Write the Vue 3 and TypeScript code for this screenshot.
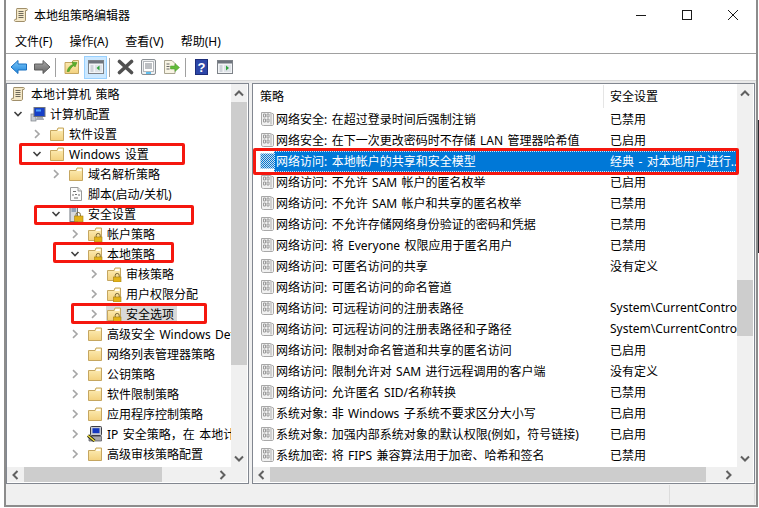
<script setup lang="ts">
type TreeNode = { label: string; level: number; icon: string; chev: '' | 'open' | 'closed'; selected?: boolean }
type PolicyRow = { name: string; value: string; selected?: boolean }

const menus = ['文件(F)', '操作(A)', '查看(V)', '帮助(H)']

const tree: TreeNode[] = [
  { label: '本地计算机 策略', level: 0, icon: 'scroll', chev: '' },
  { label: '计算机配置', level: 1, icon: 'computer', chev: 'open' },
  { label: '软件设置', level: 2, icon: 'folder', chev: 'closed' },
  { label: 'Windows 设置', level: 2, icon: 'folder', chev: 'open' },
  { label: '域名解析策略', level: 3, icon: 'folder', chev: 'closed' },
  { label: '脚本(启动/关机)', level: 3, icon: 'script', chev: '' },
  { label: '安全设置', level: 3, icon: 'server', chev: 'open' },
  { label: '帐户策略', level: 4, icon: 'lockfolder', chev: 'closed' },
  { label: '本地策略', level: 4, icon: 'lockfolder', chev: 'open' },
  { label: '审核策略', level: 5, icon: 'lockfolder', chev: 'closed' },
  { label: '用户权限分配', level: 5, icon: 'lockfolder', chev: 'closed' },
  { label: '安全选项', level: 5, icon: 'lockfolder', chev: 'closed', selected: true },
  { label: '高级安全 Windows Defender 防火墙', level: 4, icon: 'folder', chev: 'closed' },
  { label: '网络列表管理器策略', level: 4, icon: 'folder', chev: '' },
  { label: '公钥策略', level: 4, icon: 'folder', chev: 'closed' },
  { label: '软件限制策略', level: 4, icon: 'folder', chev: 'closed' },
  { label: '应用程序控制策略', level: 4, icon: 'folder', chev: 'closed' },
  { label: 'IP 安全策略，在 本地计算机', level: 4, icon: 'ipsec', chev: 'closed' },
  { label: '高级审核策略配置', level: 4, icon: 'folder', chev: 'closed' }
]

const policies: PolicyRow[] = [
  { name: '网络安全: 在超过登录时间后强制注销', value: '已禁用' },
  { name: '网络安全: 在下一次更改密码时不存储 LAN 管理器哈希值', value: '已启用' },
  { name: '网络访问: 本地帐户的共享和安全模型', value: '经典 - 对本地用户进行..', selected: true },
  { name: '网络访问: 不允许 SAM 帐户的匿名枚举', value: '已启用' },
  { name: '网络访问: 不允许 SAM 帐户和共享的匿名枚举', value: '已禁用' },
  { name: '网络访问: 不允许存储网络身份验证的密码和凭据', value: '已禁用' },
  { name: '网络访问: 将 Everyone 权限应用于匿名用户', value: '已禁用' },
  { name: '网络访问: 可匿名访问的共享', value: '没有定义' },
  { name: '网络访问: 可匿名访问的命名管道', value: '' },
  { name: '网络访问: 可远程访问的注册表路径', value: 'System\\CurrentControlSet' },
  { name: '网络访问: 可远程访问的注册表路径和子路径', value: 'System\\CurrentControlSet' },
  { name: '网络访问: 限制对命名管道和共享的匿名访问', value: '已启用' },
  { name: '网络访问: 限制允许对 SAM 进行远程调用的客户端', value: '没有定义' },
  { name: '网络访问: 允许匿名 SID/名称转换', value: '已禁用' },
  { name: '系统对象: 非 Windows 子系统不要求区分大小写', value: '已启用' },
  { name: '系统对象: 加强内部系统对象的默认权限(例如，符号链接)', value: '已启用' },
  { name: '系统加密: 将 FIPS 兼容算法用于加密、哈希和签名', value: '已禁用' }
]

const indent = (n: TreeNode) => (n.level === 0 ? 3 : 5 + (n.level - 1) * 19) + 'px'
</script>

<template>
  <div class="screen">
    <svg class="defs" width="0" height="0" aria-hidden="true">
      <defs>
        <linearGradient id="gFolder" x1="0" y1="0" x2="0" y2="1">
          <stop offset="0" stop-color="#fdeeb8" />
          <stop offset="1" stop-color="#f3d17e" />
        </linearGradient>
        <linearGradient id="gBlue" x1="0" y1="0" x2="0" y2="1">
          <stop offset="0" stop-color="#7cc8f8" />
          <stop offset="1" stop-color="#1e84dc" />
        </linearGradient>
        <linearGradient id="gGray" x1="0" y1="0" x2="0" y2="1">
          <stop offset="0" stop-color="#a8a8a8" />
          <stop offset="1" stop-color="#646464" />
        </linearGradient>
        <pattern id="pDither" width="2" height="2" patternUnits="userSpaceOnUse">
          <rect width="2" height="2" fill="#0078d7" />
          <rect width="1" height="1" fill="#d6dde4" />
          <rect x="1" y="1" width="1" height="1" fill="#d6dde4" />
        </pattern>
        <symbol id="i-scroll" viewBox="0 0 16 16">
          <path d="M4 1.5h9.5c1 0 1.2 1.5.5 2H12.5V13c0 1.2-1 1.5-1.5 1.5H2.5c-1.2 0-1.5-1.8-.5-2.2H3.5V3C3.5 2 3.6 1.5 4 1.5Z" fill="#f4e8c8" stroke="#a08f6a" />
          <path d="M5.5 4.5h5M5.5 6.5h5M5.5 8.5h5M5.5 10.5h5" stroke="#6f6a5c" />
        </symbol>
        <symbol id="i-folder" viewBox="0 0 16 16">
          <path d="M1.5 4.5H8L9 2H14.5V14.5H1.5Z" fill="url(#gFolder)" stroke="#c5a660" />
          <path d="M9.5 3H13.5V5H8.8Z" fill="#fffdf2" />
        </symbol>
        <symbol id="i-lockfolder" viewBox="0 0 16 16">
          <path d="M1.5 4.5H8L9 2H14.5V14.5H1.5Z" fill="url(#gFolder)" stroke="#c5a660" />
          <path d="M9.5 3H13.5V5H8.8Z" fill="#fffdf2" />
          <path d="M9.2 11V9.4a2 2 0 0 1 4 0V11" fill="none" stroke="#7a6a3a" />
          <rect x="7.5" y="11" width="7.5" height="5" fill="#e2b21a" stroke="#a47f10" stroke-width=".6" />
        </symbol>
        <symbol id="i-computer" viewBox="0 0 16 16">
          <rect x="1" y="8" width="5" height="7" fill="#c8ccd2" stroke="#7c8088" stroke-width=".7" />
          <rect x="4" y="1.5" width="11" height="9" fill="#1640c8" stroke="#70747c" />
          <path d="M6 3.5h5v2H6Z" fill="#4fa4ff" />
          <path d="M7 11h6v1.5H14V14H6v-1.5h1Z" fill="#a8acb4" />
        </symbol>
        <symbol id="i-script" viewBox="0 0 16 16">
          <path d="M2.5 1.5H10L13.5 5V14.5H2.5Z" fill="#fbfbfb" stroke="#9a9a9a" />
          <path d="M10 1.5V5H13.5" fill="#e8e8e8" stroke="#9a9a9a" />
          <path d="M5 5.5h3M5.5 8l-1 1 1 1M10.5 8l1 1-1 1M7 8.5h2M6 12h4" stroke="#707070" fill="none" />
        </symbol>
        <symbol id="i-server" viewBox="0 0 16 16">
          <rect x="2" y="0.5" width="7.5" height="15" fill="#d7dbe0" stroke="#70767e" />
          <path d="M3.5 3h4.5M3.5 5h4.5" stroke="#4c6a8e" />
          <path d="M8 10V8.6a2.2 2.2 0 0 1 4.4 0V10" fill="none" stroke="#7a6a3a" />
          <rect x="6.5" y="10" width="8.5" height="5.8" fill="#e2b21a" stroke="#a47f10" stroke-width=".6" />
        </symbol>
        <symbol id="i-ipsec" viewBox="0 0 16 16">
          <rect x="3.5" y="0.5" width="11" height="9" rx="1" fill="#c8ccd2" stroke="#3c3c44" />
          <rect x="5.5" y="2.2" width="7" height="5" fill="#1438c0" />
          <path d="M2 10.5h12.5V15H2Z" fill="#a8a8ac" stroke="#505058" stroke-width=".7" />
          <path d="M1 9.5l6.5 5.5" stroke="#1c1c10" stroke-width="3" />
          <path d="M1 9.5l6.5 5.5" stroke="#f2e23a" stroke-width="1.6" />
        </symbol>
        <symbol id="i-policy" viewBox="0 0 14 16">
          <path d="M1.5 1.5H10L13.5 3V13c0 1-.5 1.5-1.5 1.5H3.5c-1.5 0-2-.8-2-1.5Z" fill="#f1f1f1" stroke="#a8a8a8" />
          <path d="M3.5 3h2v3h-2ZM7 3h2v3H7ZM3.5 8h2v3h-2ZM7 8h2v3H7Z" fill="none" stroke="#9c9c9c" />
          <path d="M11 2v11.5" stroke="#c8c8c8" stroke-width="1.6" />
        </symbol>
        <symbol id="i-policy-sel" viewBox="0 0 14 16">
          <rect x="0.5" y="0.5" width="13.5" height="15" fill="url(#pDither)" />
        </symbol>
        <symbol id="i-paneview" viewBox="0 0 16 14">
          <rect x="0.5" y="0.5" width="15" height="13" fill="#f2f4f6" stroke="#7d8288" />
          <rect x="1" y="1" width="14" height="2.5" fill="#6e747c" />
          <rect x="2.5" y="5" width="3" height="7" fill="#cfd4da" />
          <rect x="7" y="5" width="7" height="7" fill="#dfe3e8" />
        </symbol>
      </defs>
    </svg>

    <div class="window">
      <header class="titlebar">
        <svg class="title-ico"><use href="#i-scroll" /></svg>
        <span class="title-text">本地组策略编辑器</span>
        <div class="caption">
          <span class="cap-btn"><svg width="12" height="12" viewBox="0 0 12 12"><path d="M1 6.5h10" stroke="#1a1a1a" /></svg></span>
          <span class="cap-btn"><svg width="12" height="12" viewBox="0 0 12 12"><rect x="1.5" y="1.5" width="9" height="9" fill="none" stroke="#1a1a1a" /></svg></span>
          <span class="cap-btn"><svg width="12" height="12" viewBox="0 0 12 12"><path d="M1 1l10 10M11 1L1 11" stroke="#1a1a1a" /></svg></span>
        </div>
      </header>

      <nav class="menubar">
        <span v-for="m in menus" :key="m" class="menu-item">{{ m }}</span>
      </nav>

      <div class="toolbar">
        <span class="tb"><svg width="18" height="16" viewBox="0 0 18 16"><path d="M1 8l7-6.5V5h8.5v6H8v3.5Z" fill="url(#gBlue)" stroke="#1a70c0" stroke-linejoin="round" /></svg></span>
        <span class="tb"><svg width="18" height="16" viewBox="0 0 18 16"><path d="M17 8l-7-6.5V5H1.5v6H10v3.5Z" fill="url(#gGray)" stroke="#5c5c5c" stroke-linejoin="round" /></svg></span>
        <i class="tb-sep"></i>
        <span class="tb">
          <svg width="16" height="16" viewBox="0 0 16 16">
            <path d="M1 3.5H8L9 1.5H14.5V14.5H1Z" fill="url(#gFolder)" stroke="#c5a660" />
            <path d="M3 12.5C4 8.5 6 6.5 9 5.5L8 3l5 .5-2 4.5-1-1.6C7.5 8 6 10 5.2 12.5Z" fill="#5cb02c" stroke="#3c8a1c" stroke-width=".5" />
          </svg>
        </span>
        <span class="tb tb-active">
          <svg width="16" height="14" viewBox="0 0 16 14">
            <use href="#i-paneview" />
            <path d="M11.5 5.5v5l-3-2.5Z" fill="#2fa43c" />
          </svg>
        </span>
        <i class="tb-sep"></i>
        <span class="tb"><svg width="17" height="16" viewBox="0 0 17 16"><path d="M2.5 2.5l12 11M14.5 2.5l-12 11" stroke="#505050" stroke-width="3.6" stroke-linecap="round" /></svg></span>
        <span class="tb">
          <svg width="15" height="16" viewBox="0 0 15 16">
            <rect x="0.5" y="0.5" width="14" height="15" rx="1.5" fill="#eef0f2" stroke="#8a8f94" />
            <rect x="2.5" y="2.5" width="10" height="10" fill="#fff" stroke="#b4b8bc" />
            <path d="M4 5h7M4 7h7M4 9h7" stroke="#7a8088" />
            <path d="M5 14h5" stroke="#3cb0e8" stroke-width="1.6" />
          </svg>
        </span>
        <span class="tb">
          <svg width="17" height="16" viewBox="0 0 17 16">
            <path d="M1.5 1.5H9L12 4.5V14.5H1.5Z" fill="#f8f4e4" stroke="#a8a490" />
            <path d="M3.5 5h3M3.5 7.5h3M3.5 10h3" stroke="#666" />
            <path d="M7.5 7h4.500V4.500L16.500 8.500l-4.500 4V10H7.500Z" fill="#62bc3a" stroke="#48982a" stroke-width=".5" />
          </svg>
        </span>
        <i class="tb-sep"></i>
        <span class="tb">
          <svg width="13" height="16" viewBox="0 0 13 16">
            <rect x="0.5" y="0.5" width="12" height="15" fill="#2c46a8" stroke="#1c2c78" />
            <text x="6.5" y="12.5" text-anchor="middle" font-size="13" font-weight="700" font-family="Liberation Sans, sans-serif" fill="#ffffff">?</text>
          </svg>
        </span>
        <span class="tb">
          <svg width="16" height="14" viewBox="0 0 16 14">
            <use href="#i-paneview" />
            <path d="M9 5.5v5l3-2.5Z" fill="#2fa43c" />
          </svg>
        </span>
      </div>

      <div class="band"></div>

      <main class="panes">
        <section class="pane pane-left">
          <div class="tree">
            <div v-for="n in tree" :key="n.label" class="tree-row" :class="{ root: n.level === 0 }" :style="{ paddingLeft: indent(n) }">
              <span v-if="n.level > 0" class="chev">
                <svg v-if="n.chev === 'open'" width="10" height="8" viewBox="0 0 10 8"><path d="M1.5 2l3.5 3.5L8.500 2" fill="none" stroke="#404040" stroke-width="1.6" /></svg>
                <svg v-else-if="n.chev === 'closed'" width="8" height="10" viewBox="0 0 8 10"><path d="M2 1.200L6 5 2 8.800" fill="none" stroke="#a6a6a6" stroke-width="1.600" /></svg>
              </span>
              <span class="tree-item" :class="{ selected: n.selected }">
                <svg class="tree-ico"><use :href="'#i-' + n.icon" /></svg>
                <span class="tree-label">{{ n.label }}</span>
              </span>
            </div>
          </div>
          <div class="vbar">
            <span class="arrow-v"><svg width="10" height="7" viewBox="0 0 10 7"><path d="M1 5.500l4-4 4 4" fill="none" stroke="#606060" stroke-width="2" /></svg></span>
            <span class="thumb-v thumb-left"></span>
            <span class="spacer"></span>
            <span class="arrow-v"><svg width="10" height="7" viewBox="0 0 10 7"><path d="M1 1.500l4 4 4-4" fill="none" stroke="#606060" stroke-width="2" /></svg></span>
          </div>
          <div class="hbar">
            <span class="arrow-h"><svg width="7" height="10" viewBox="0 0 7 10"><path d="M5.500 1l-4 4 4 4" fill="none" stroke="#606060" stroke-width="2" /></svg></span>
            <span class="thumb-h thumb-h-left"></span>
            <span class="spacer"></span>
            <span class="arrow-h"><svg width="7" height="10" viewBox="0 0 7 10"><path d="M1.500 1l4 4-4 4" fill="none" stroke="#606060" stroke-width="2" /></svg></span>
          </div>
          <div class="corner"></div>
        </section>

        <section class="pane pane-right">
          <div class="list">
            <div class="list-head">
              <span class="head-name">策略</span>
              <span class="head-sep"></span>
              <span class="head-value">安全设置</span>
            </div>
            <div v-for="p in policies" :key="p.name" class="list-row">
              <svg class="policy-ico"><use :href="p.selected ? '#i-policy-sel' : '#i-policy'" /></svg>
              <div class="cells" :class="{ selected: p.selected }">
                <span class="cell-name">{{ p.name }}</span>
                <span class="cell-value">{{ p.value }}</span>
              </div>
            </div>
          </div>
          <div class="vbar">
            <span class="arrow-v"><svg width="10" height="7" viewBox="0 0 10 7"><path d="M1 5.500l4-4 4 4" fill="none" stroke="#606060" stroke-width="2" /></svg></span>
            <span class="thumb-v thumb-right"></span>
            <span class="spacer"></span>
            <span class="arrow-v"><svg width="10" height="7" viewBox="0 0 10 7"><path d="M1 1.500l4 4 4-4" fill="none" stroke="#606060" stroke-width="2" /></svg></span>
          </div>
          <div class="hbar">
            <span class="arrow-h"><svg width="7" height="10" viewBox="0 0 7 10"><path d="M5.500 1l-4 4 4 4" fill="none" stroke="#606060" stroke-width="2" /></svg></span>
            <span class="thumb-h thumb-h-right"></span>
            <span class="spacer"></span>
            <span class="arrow-h"><svg width="7" height="10" viewBox="0 0 7 10"><path d="M1.500 1l4 4-4 4" fill="none" stroke="#606060" stroke-width="2" /></svg></span>
          </div>
          <div class="corner"></div>
        </section>
      </main>

      <footer class="statusbar">
        <span class="status-main"></span>
        <span class="status-cell"></span>
      </footer>
    </div>

    <i class="mark mark-windows"></i>
    <i class="mark mark-security"></i>
    <i class="mark mark-local"></i>
    <i class="mark mark-options"></i>
    <i class="mark mark-row"></i>
    <i class="edge-strip"></i>
  </div>
</template>

<style scoped>
.screen {
  position: relative;
  width: 759px;
  height: 508px;
  overflow: hidden;
  background: #fff;
  font-family: "Noto Sans", "Noto Sans CJK SC", sans-serif;
  font-size: 12px;
  word-spacing: 1.3px;
  color: #000;
}
.defs { position: absolute; }
.window {
  box-sizing: border-box;
  width: 754px;
  height: 507px;
  margin-left: 4px;
  border: solid #8c8c8c;
  border-width: 0 2px 2px 2px;
  background: #f0f0f0;
  display: flex;
  flex-direction: column;
}
.titlebar {
  height: 30px;
  flex: none;
  background: #fff;
  display: flex;
  align-items: center;
  padding-left: 7px;
}
.title-ico { width: 16px; height: 16px; flex: none; }
.title-text { margin-left: 5px; }
.caption { margin-left: auto; display: flex; }
.cap-btn {
  width: 46px;
  height: 30px;
  display: flex;
  align-items: center;
  justify-content: center;
}
.menubar {
  box-sizing: border-box;
  height: 24px;
  flex: none;
  background: #fff;
  border-bottom: 1px solid #a0a0a0;
  display: flex;
  align-items: center;
  padding: 0 0 2px 9px;
}
.menu-item { margin-right: 17px; }
.toolbar {
  box-sizing: border-box;
  height: 27px;
  flex: none;
  background: #fff;
  border-bottom: 1px solid #d8d8d8;
  display: flex;
  align-items: center;
  padding-left: 1px;
}
.tb {
  box-sizing: border-box;
  width: 23px;
  height: 23px;
  display: flex;
  align-items: center;
  justify-content: center;
  flex: none;
}
.tb-active {
  background: #cce8ff;
  border: 1px solid #99d1ff;
  margin-left: 1px;
}
.tb-sep {
  width: 1px;
  height: 19px;
  background: #a0a0a0;
  margin: 0 4px 0 2px;
  flex: none;
}
.band { height: 2px; flex: none; background: #e9e9e9; }
.panes {
  height: 401px;
  flex: none;
  display: flex;
  gap: 3px;
  padding-right: 1px;
}
.pane {
  box-sizing: border-box;
  border: 1px solid #828790;
  background: #fff;
  padding: 0 1px 1px 0;
  display: grid;
  grid-template-columns: minmax(0, 1fr) 16px;
  grid-template-rows: minmax(0, 1fr) 15px;
}
.pane-left { width: 243px; flex: none; }
.pane-right { flex: 1; min-width: 0; }
.tree { overflow: hidden; }
.tree-row {
  height: 20px;
  display: flex;
  align-items: center;
  white-space: nowrap;
}
.chev {
  width: 12px;
  flex: none;
  display: flex;
  align-items: center;
  justify-content: center;
  margin-right: 6px;
}
.tree-item {
  display: flex;
  align-items: center;
  gap: 4px;
  height: 18px;
}
.tree-item.selected { background: #d9d9d9; padding-right: 3px; }
.tree-ico { width: 16px; height: 16px; flex: none; }
.root .tree-item { gap: 5px; }
.vbar {
  background: #f0f0f0;
  display: flex;
  flex-direction: column;
}
.hbar {
  background: #f0f0f0;
  display: flex;
}
.corner { background: #f0f0f0; }
.spacer { flex: 1; }
.arrow-v {
  height: 18px;
  flex: none;
  display: flex;
  align-items: center;
  justify-content: center;
}
.arrow-h {
  width: 17px;
  flex: none;
  display: flex;
  align-items: center;
  justify-content: center;
}
.thumb-v, .thumb-h { background: #cdcdcd; flex: none; }
.thumb-left { height: 263px; }
.thumb-right { height: 56px; margin-top: 178px; }
.thumb-h-left { width: 138px; }
.thumb-h-right { width: 436px; }
.list { overflow: hidden; }
.list-head {
  height: 25px;
  display: flex;
  align-items: center;
}
.head-name { width: 350px; padding: 0 0 2px 7px; box-sizing: border-box; }
.head-sep { width: 1px; height: 23px; background: #e5e5e5; flex: none; }
.head-value { margin-left: 6px; padding-bottom: 2px; }
.list-row {
  height: 21px;
  display: flex;
  align-items: center;
  padding-left: 7px;
}
.policy-ico { width: 14px; height: 16px; flex: none; margin-bottom: 2px; }
.cells {
  flex: 1;
  min-width: 0;
  height: 21px;
  display: flex;
  align-items: center;
  white-space: nowrap;
}
.cells.selected {
  background: #0078d7;
  color: #fff;
  outline: 1px dotted #cfe4f7;
  outline-offset: -1px;
}
.cell-name {
  box-sizing: border-box;
  width: 336px;
  padding: 0 0 2px 2px;
  overflow: hidden;
  flex: none;
}
.cell-value {
  flex: 1;
  min-width: 0;
  padding-bottom: 2px;
  overflow: hidden;
}
.statusbar {
  flex: 1;
  display: flex;
  padding: 1px 1px 1px 0;
  box-sizing: border-box;
}
.status-main { width: 663px; flex: none; border-right: 1px solid #dcdcdc; }
.status-cell { flex: 1; border-right: 1px solid #dcdcdc; }
.mark {
  position: absolute;
  box-sizing: border-box;
  border: 3px solid #f5170e;
  border-radius: 2px;
}
.mark-windows { left: 19px; top: 143px; width: 166px; height: 22px; }
.mark-security { left: 34px; top: 205px; width: 160px; height: 20px; }
.mark-local { left: 53px; top: 242px; width: 121px; height: 21px; }
.mark-options { left: 71px; top: 303px; width: 136px; height: 21px; }
.mark-row { left: 253px; top: 148px; width: 486px; height: 27px; }
.edge-strip {
  position: absolute;
  left: 758px;
  top: 120px;
  width: 1px;
  height: 133px;
  background: #2a2a30;
}
</style>
